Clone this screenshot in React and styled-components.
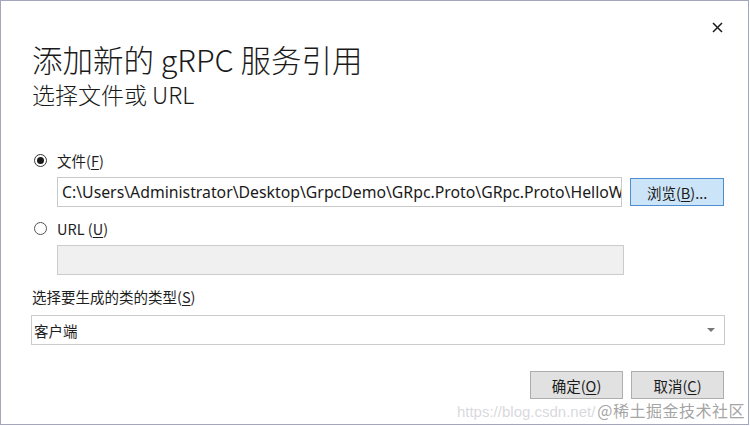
import React from "react";
import styled, { createGlobalStyle } from "styled-components";

const GlobalStyle = createGlobalStyle`
  html, body {
    margin: 0;
    padding: 0;
    background: #ffffff;
  }
  body {
    font-family: "Open Sans", "Noto Sans CJK SC", sans-serif;
    color: #1e1e1e;
  }
`

const Dialog = styled.div`
  position: relative;
  box-sizing: border-box;
  width: 749px;
  height: 425px;
  border: 1px solid #a3a6bd;
  background: #ffffff;
  display: flex;
  flex-direction: column;
  padding: 0 24px 0 31px;
  overflow: hidden;
`

const TopBar = styled.div`
  display: flex;
  justify-content: flex-end;
  height: 34px;
  align-items: flex-end;
  margin-right: -1px;
`

const CloseButton = styled.div`
  width: 16px;
  height: 16px;
  display: flex;
  align-items: center;
  justify-content: center;
`

const Title = styled.div`
  font-size: 30.5px;
  line-height: 40px;
  font-family: "Noto Sans CJK SC", sans-serif;
  font-weight: 300;
  color: #1a1a1a;
  margin-top: 4px;
`

const Subtitle = styled.div`
  font-size: 23px;
  line-height: 30px;
  font-family: "Noto Sans CJK SC", sans-serif;
  font-weight: 300;
  color: #1a1a1a;
`

const RadioRow = styled.label`
  display: flex;
  align-items: center;
  height: 22px;
  margin-top: ${(p) => p.top}px;
  margin-left: 2px;
  font-size: 14.5px;
  font-family: "Noto Sans CJK SC", sans-serif;
  gap: 10px;
`

const RadioCircle = styled.span`
  box-sizing: border-box;
  width: 13px;
  height: 13px;
  border-radius: 50%;
  border: 1px solid ${(p) => (p.checked ? "#333" : "#555")};
  display: flex;
  align-items: center;
  justify-content: center;
  &::after {
    content: "";
    display: ${(p) => (p.checked ? "block" : "none")};
    width: 7px;
    height: 7px;
    border-radius: 50%;
    background: #1a1a1a;
  }
`

const Key = styled.span`
  text-decoration: underline;
  text-underline-offset: 2px;
`

const FieldRow = styled.div`
  display: flex;
  align-items: center;
  gap: 8px;
  margin-left: 25px;
  margin-top: 6px;
`

const TextBox = styled.div`
  box-sizing: border-box;
  width: 567px;
  height: 30px;
  border: 1px solid ${(p) => (p.disabled ? "#cccccc" : "#c9c9c9")};
  background: ${(p) => (p.disabled ? "#f0f0f0" : "#ffffff")};
  padding: 0 4px;
  display: flex;
  align-items: center;
  white-space: nowrap;
  overflow: hidden;
  font-size: 15.8px;
  font-family: "Noto Sans", sans-serif;
  color: #1a1a1a;
`

const Button = styled.div`
  box-sizing: border-box;
  width: ${(p) => p.w || 93}px;
  height: 28px;
  border: 1px solid ${(p) => (p.primary ? "#4c8fd0" : "#adadad")};
  background: ${(p) => (p.primary ? "#cce4f7" : "#e1e1e1")};
  display: flex;
  align-items: center;
  justify-content: center;
  font-size: 14.5px;
  font-family: "Noto Sans CJK SC", sans-serif;
  color: #1a1a1a;
`

const FieldLabel = styled.div`
  font-size: 14.5px;
  font-family: "Noto Sans CJK SC", sans-serif;
  margin-top: 11px;
  line-height: 22px;
`

const Select = styled.div`
  box-sizing: border-box;
  width: 694px;
  height: 30px;
  margin-top: 7px;
  margin-left: -1px;
  border: 1px solid #cbcbcb;
  background: #ffffff;
  display: flex;
  align-items: center;
  justify-content: space-between;
  padding: 0 9px 0 2px;
  font-size: 14.5px;
  font-family: "Noto Sans CJK SC", sans-serif;
`

const Caret = styled.span`
  width: 0;
  height: 0;
  border-left: 4px solid transparent;
  border-right: 4px solid transparent;
  border-top: 4px solid #777;
`

const Footer = styled.div`
  display: flex;
  justify-content: flex-end;
  gap: 8px;
  margin-top: 26px;
`

const Watermark = styled.div`
  position: absolute;
  right: 3px;
  bottom: 2px;
  display: flex;
  align-items: baseline;
  gap: 2px;
  pointer-events: none;
`

const WaterUrl = styled.span`
  font-family: "Liberation Sans", sans-serif;
  font-size: 15px;
  color: rgba(190, 190, 200, 0.6);
`

const WaterName = styled.span`
  font-family: "Noto Sans CJK SC", serif;
  font-size: 16px;
  color: rgba(140, 140, 140, 0.8);
  letter-spacing: 0.5px;
`

export default function App() {
  return (
    <>
      <GlobalStyle />
      <Dialog>
        <TopBar>
          <CloseButton>
            <svg width="11" height="11" viewBox="0 0 11 11">
              <path d="M1 1 L10 10 M10 1 L1 10" stroke="#1a1a1a" strokeWidth="1.5" />
            </svg>
          </CloseButton>
        </TopBar>
        <Title>添加新的 gRPC 服务引用</Title>
        <Subtitle>选择文件或 URL</Subtitle>

        <RadioRow top={40}>
          <RadioCircle checked />
          <span>文件(<Key>F</Key>)</span>
        </RadioRow>
        <FieldRow>
          <TextBox>C:\Users\Administrator\Desktop\GrpcDemo\GRpc.Proto\GRpc.Proto\HelloW</TextBox>
          <Button primary w={94}>浏览(<Key>B</Key>)...</Button>
        </FieldRow>

        <RadioRow top={10}>
          <RadioCircle />
          <span>URL (<Key>U</Key>)</span>
        </RadioRow>
        <FieldRow>
          <TextBox disabled />
        </FieldRow>

        <FieldLabel>选择要生成的类的类型(<Key>S</Key>)</FieldLabel>
        <Select>
          <span>客户端</span>
          <Caret />
        </Select>

        <Footer>
          <Button>确定(<Key>O</Key>)</Button>
          <Button>取消(<Key>C</Key>)</Button>
        </Footer>

        <Watermark>
          <WaterUrl>https://blog.csdn.net/</WaterUrl>
          <WaterName>@稀土掘金技术社区</WaterName>
        </Watermark>
      </Dialog>
    </>
  );
}
